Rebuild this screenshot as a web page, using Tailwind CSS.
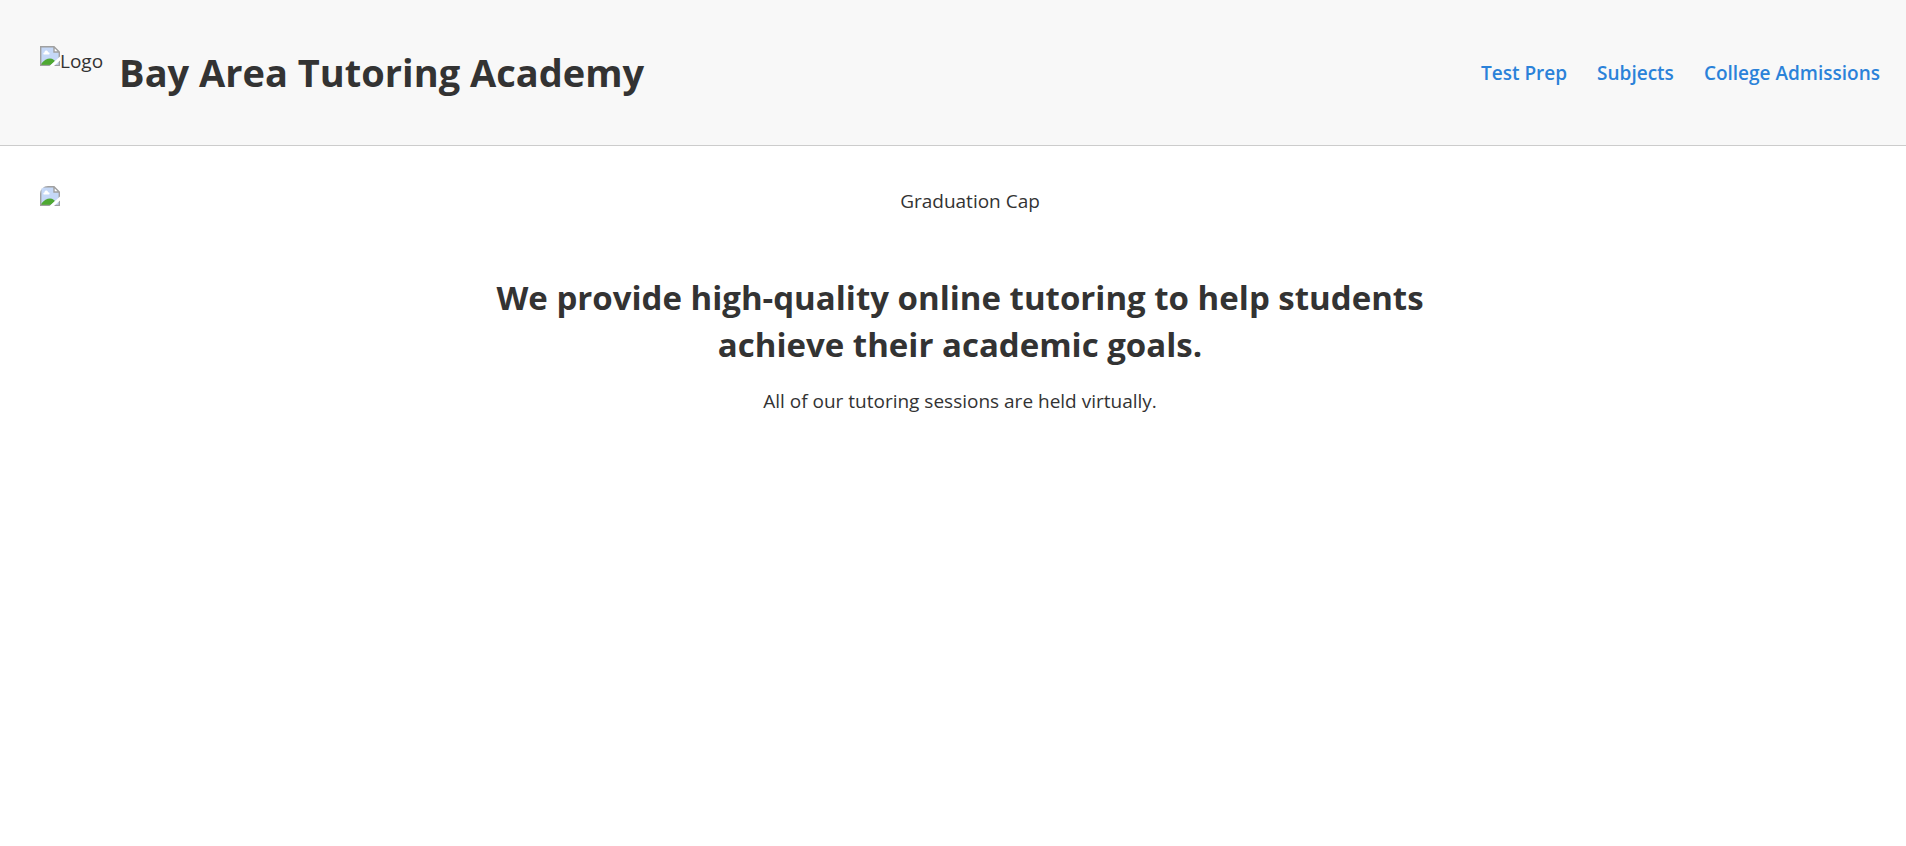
<!DOCTYPE html>
<html lang="en">
<head>
<meta charset="utf-8">
<meta name="viewport" content="width=device-width, initial-scale=1">
<title>Bay Area Tutoring Academy</title>
<script src="https://cdn.jsdelivr.net/npm/@tailwindcss/browser@4"></script>
</head>
<body class="min-h-screen bg-white font-['Segoe_UI','Open_Sans',sans-serif] text-[19px] leading-[30px] text-[#333333]">
<svg class="hidden" aria-hidden="true">
  <symbol id="missing-image" viewBox="0 0 20 20">
    <path d="M1 1H14L19 6V19H1Z" fill="#c5d8f7"/>
    <path d="M4 8.500C3 8.500 3 6.500 4.500 6.500C4.500 4 8 4 8 6.200C10 6 10 8.500 8.700 8.500Z" fill="#fff"/>
    <path d="M1 18C4 14 7 12.500 10 12.500C13 12.500 14 14 15 15L11 19H1Z" fill="#4ea832"/>
    <path d="M14 1V6H19Z" fill="#fff"/>
    <path d="M0.700 20V0.700H14L19.300 6V20M14 1V6H19" fill="none" stroke="#a0a0a0" stroke-width="1.400"/>
    <path d="M0 19.400H20" stroke="#a0a0a0" stroke-width="1.200"/>
    <path d="M20 10.500V14.500L14 20H9.500Z" fill="#fff"/>
  </symbol>
</svg>
<header class="flex flex-wrap items-center justify-between gap-4 border-b border-[#cccccc] bg-[#f8f8f8] py-10 pr-[26px] pl-10">
  <div class="flex items-center gap-4">
    <div class="flex h-[54px] items-start">
      <svg class="size-5 shrink-0" role="img" aria-label="Logo image"><use href="#missing-image"/></svg>
      <span>Logo</span>
    </div>
    <h1 class="text-[38px] leading-[65px] font-bold">Bay Area Tutoring Academy</h1>
  </div>
  <nav class="flex flex-wrap gap-[30px] font-semibold text-[#2b82d9]">
    <a href="#test-prep">Test Prep</a>
    <a href="#subjects">Subjects</a>
    <a href="#college-admissions">College Admissions</a>
  </nav>
</header>
<main class="py-10 pr-[26px] pl-10 text-center">
  <div class="flex items-start">
    <svg class="size-5 shrink-0 rounded-tl-lg" role="img" aria-label="Graduation cap image"><use href="#missing-image"/></svg>
    <span class="grow">Graduation Cap</span>
  </div>
  <section class="mx-auto mt-[58px] max-w-[1000px]">
    <h2 class="text-[33px] leading-[47px] font-bold">We provide high-quality online tutoring to help students achieve their academic goals.</h2>
    <p class="mt-[18px]">All of our tutoring sessions are held virtually.</p>
  </section>
</main>
</body>
</html>
